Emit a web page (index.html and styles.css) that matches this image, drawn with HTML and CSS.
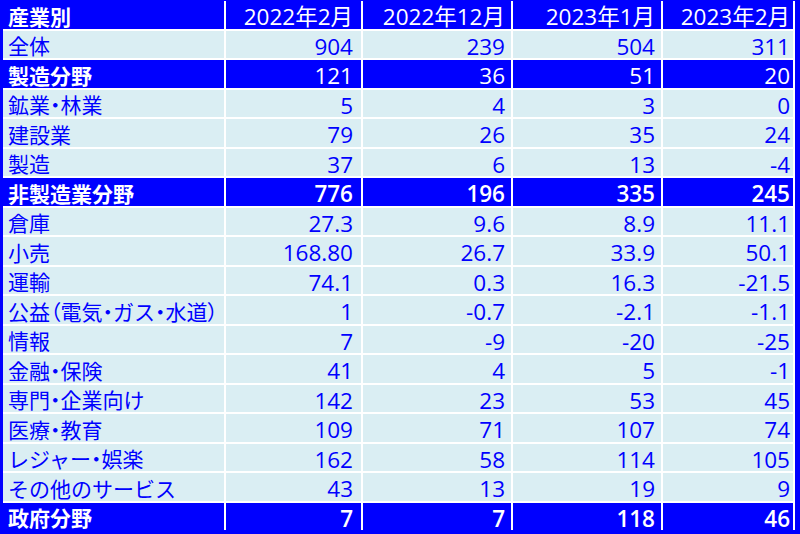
FILE: index.html
```html
<!DOCTYPE html>
<html lang="ja">
<head>
<meta charset="utf-8">
<link rel="stylesheet" href="styles.css">
</head>
<body>
<div class="sheet">
  <div class="grid">
    <div class="c lab hd b">産業別</div><div class="c num n2 hd">2022年2月</div><div class="c num n3 hd">2022年12月</div><div class="c num n4 hd">2023年1月</div><div class="c num n5 hd">2023年2月</div>
    <div class="c lab">全体</div><div class="c num n2">904</div><div class="c num n3">239</div><div class="c num n4">504</div><div class="c num n5">311</div>
    <div class="c lab hd b">製造分野</div><div class="c num n2 hd">121</div><div class="c num n3 hd">36</div><div class="c num n4 hd">51</div><div class="c num n5 hd">20</div>
    <div class="c lab">鉱業<span class="p">・</span>林業</div><div class="c num n2">5</div><div class="c num n3">4</div><div class="c num n4">3</div><div class="c num n5">0</div>
    <div class="c lab">建設業</div><div class="c num n2">79</div><div class="c num n3">26</div><div class="c num n4">35</div><div class="c num n5">24</div>
    <div class="c lab">製造</div><div class="c num n2">37</div><div class="c num n3">6</div><div class="c num n4">13</div><div class="c num n5">-4</div>
    <div class="c lab hd b">非製造業分野</div><div class="c num n2 hd b">776</div><div class="c num n3 hd b">196</div><div class="c num n4 hd b">335</div><div class="c num n5 hd b">245</div>
    <div class="c lab">倉庫</div><div class="c num n2">27.3</div><div class="c num n3">9.6</div><div class="c num n4">8.9</div><div class="c num n5">11.1</div>
    <div class="c lab">小売</div><div class="c num n2">168.80</div><div class="c num n3">26.7</div><div class="c num n4">33.9</div><div class="c num n5">50.1</div>
    <div class="c lab">運輸</div><div class="c num n2">74.1</div><div class="c num n3">0.3</div><div class="c num n4">16.3</div><div class="c num n5">-21.5</div>
    <div class="c lab">公益<span class="p">（</span>電気<span class="p">・</span>ガス<span class="p">・</span>水道<span class="p">）</span></div><div class="c num n2">1</div><div class="c num n3">-0.7</div><div class="c num n4">-2.1</div><div class="c num n5">-1.1</div>
    <div class="c lab">情報</div><div class="c num n2">7</div><div class="c num n3">-9</div><div class="c num n4">-20</div><div class="c num n5">-25</div>
    <div class="c lab">金融<span class="p">・</span>保険</div><div class="c num n2">41</div><div class="c num n3">4</div><div class="c num n4">5</div><div class="c num n5">-1</div>
    <div class="c lab">専門<span class="p">・</span>企業向け</div><div class="c num n2">142</div><div class="c num n3">23</div><div class="c num n4">53</div><div class="c num n5">45</div>
    <div class="c lab">医療<span class="p">・</span>教育</div><div class="c num n2">109</div><div class="c num n3">71</div><div class="c num n4">107</div><div class="c num n5">74</div>
    <div class="c lab">レジャー<span class="p">・</span>娯楽</div><div class="c num n2">162</div><div class="c num n3">58</div><div class="c num n4">114</div><div class="c num n5">105</div>
    <div class="c lab">その他のサービス</div><div class="c num n2">43</div><div class="c num n3">13</div><div class="c num n4">19</div><div class="c num n5">9</div>
    <div class="c lab hd b">政府分野</div><div class="c num n2 hd b">7</div><div class="c num n3 hd b">7</div><div class="c num n4 hd b">118</div><div class="c num n5 hd b">46</div>
  </div>
</div>
</body>
</html>
```

FILE: styles.css
```css
html, body {
  margin: 0;
  padding: 0;
}

body {
  width: 800px;
  height: 534px;
  overflow: hidden;
  font-family: "Noto Sans CJK JP", sans-serif;
  font-size: 21px;
}

.sheet {
  box-sizing: border-box;
  width: 800px;
  height: 534px;
  background: #0000ff;
  padding: 1px 5px 4px 3px;
}

.grid {
  display: grid;
  grid-template-columns: 221px 135px 148px 148px 130px;
  grid-auto-rows: 27.5px;
  gap: 2px;
  background: #ffffff;
  padding-right: 2px;
}

.c {
  box-sizing: border-box;
  background: #daeef3;
  color: #0000ff;
  line-height: 23px;
  white-space: nowrap;
}

.c.hd {
  background: #0000ff;
  color: #ffffff;
}

.lab {
  font-family: "Noto Sans CJK JP", sans-serif;
  font-size: 21px;
  padding-top: 3.5px;
  padding-left: 5px;
  text-align: left;
}

.lab.b {
  font-weight: 700;
}

.p {
  font-feature-settings: "palt";
}

.num {
  font-family: "Open Sans", "Noto Sans CJK JP", sans-serif;
  font-size: 22.5px;
  padding-top: 4px;
  text-align: right;
}

.num.b {
  font-weight: 600;
}

.n2 { padding-right: 8px; }
.n3 { padding-right: 6px; }
.n4 { padding-right: 6px; }
.n5 { padding-right: 3px; }
```
